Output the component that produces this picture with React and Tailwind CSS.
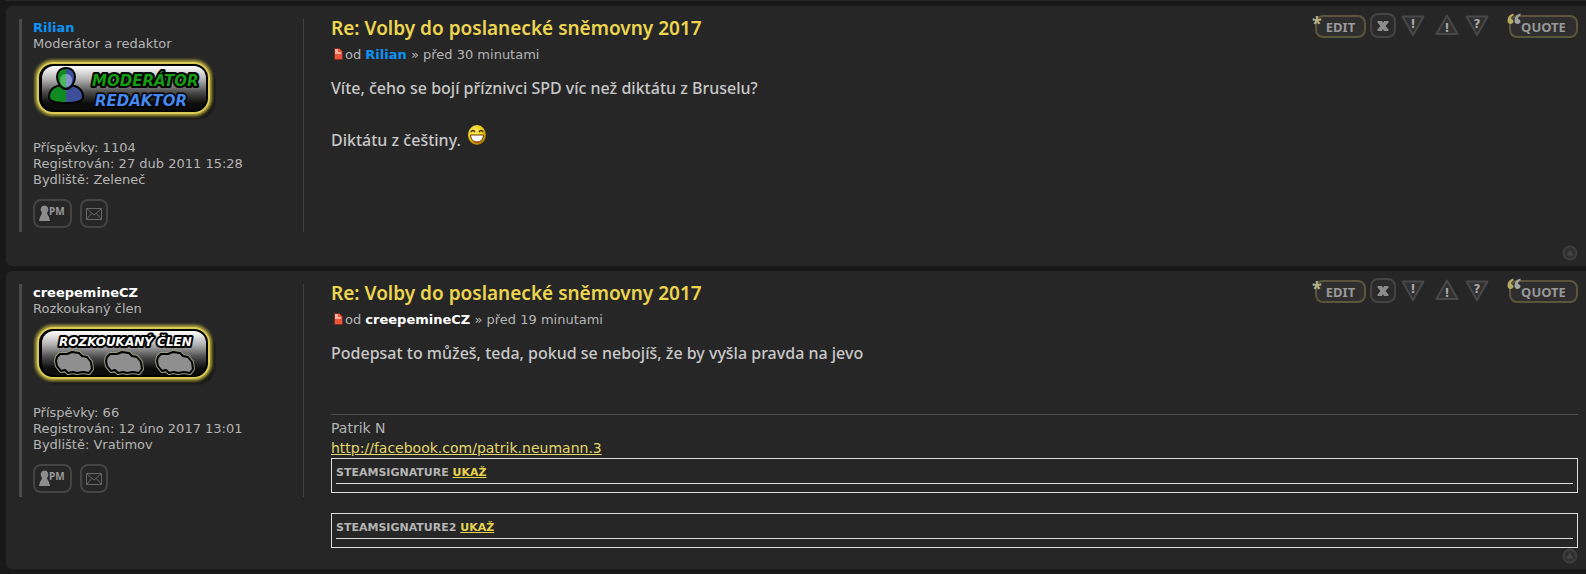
const posts = [
  {
    id: "p1",
    author: "Rilian",
    authorColor: "text-[#0c93f5]",
    rank: "Moderátor a redaktor",
    badge: "moderator",
    count: "1104",
    joined: "27 dub 2011 15:28",
    place: "Zeleneč",
    time: "před 30 minutami",
  },
  {
    id: "p2",
    author: "creepemineCZ",
    authorColor: "text-white",
    rank: "Rozkoukaný člen",
    badge: "member",
    count: "66",
    joined: "12 úno 2017 13:01",
    place: "Vratimov",
    time: "před 19 minutami",
  },
];

function BadgeFrame({ id, label, children }) {
  return (
    <svg width="184" height="64" viewBox="0 0 184 64" role="img" aria-label={label} className="block">
      <defs>
        <linearGradient id={`${id}-fill`} x1="0" y1="0" x2="0" y2="1">
          <stop offset="0" stopColor="#ffffff" />
          <stop offset="0.3" stopColor="#b4b4b4" />
          <stop offset="0.6" stopColor="#4a4a4a" />
          <stop offset="0.85" stopColor="#0c0c0c" />
        </linearGradient>
        <filter id={`${id}-glow`} x="-10%" y="-20%" width="120%" height="140%">
          <feGaussianBlur stdDeviation="1.6" />
        </filter>
      </defs>
      <rect x="6" y="8" width="175" height="53" rx="16" fill="#111111" filter={`url(#${id}-glow)`} />
      <rect x="4" y="5" width="173" height="52" rx="16" fill="none" stroke="#b5a83e" strokeWidth="4" filter={`url(#${id}-glow)`} />
      <rect x="5" y="6" width="171" height="50" rx="15" fill="#000000" stroke="#d9cb55" strokeWidth="2" />
      <rect x="9" y="9" width="164" height="44" rx="12" fill={`url(#${id}-fill)`} />
      {children}
    </svg>
  );
}

function ModeratorBadge() {
  return (
    <BadgeFrame id="moderator" label="Moderátor redaktor">
      <defs>
        <linearGradient id="person" x1="0" y1="0" x2="1" y2="0">
          <stop offset="0.5" stopColor="#128a22" />
          <stop offset="0.5" stopColor="#3c4f98" />
        </linearGradient>
      </defs>
      <g transform="translate(0 2)">
        <g stroke="#000000" strokeWidth="2" fill="url(#person)">
          <path d="M16 38c0-8 6-11 13-12v-4h8v4c7 1 13 4 13 12 0 4-7 6-17 6s-17-2-17-6z" />
          <path d="M33 9c6 0 9 4 9 9s-4 12-9 12-9-7-9-12 3-9 9-9z" />
        </g>
        <path d="M33 15c-4 0-6 3-6 6 0 4 2 7 6 7z" fill="#4bb560" />
        <path d="M33 15c4 0 6 3 6 6 0 4-2 7-6 7z" fill="#8195cc" />
      </g>
      <g
        fontFamily="'DejaVu Sans', sans-serif"
        fontStyle="italic"
        fontWeight="700"
        fontSize="15"
        stroke="#000000"
        paintOrder="stroke"
        strokeLinejoin="round"
      >
        <text x="59" y="29" fill="#159c15" strokeWidth="4">
          MODERÁTOR
        </text>
        <text x="62" y="49" fill="#4688ee" strokeWidth="3">
          REDAKTOR
        </text>
      </g>
    </BadgeFrame>
  );
}

function MemberBadge() {
  return (
    <BadgeFrame id="member" label="Rozkoukaný člen">
      <text
        x="26"
        y="24"
        fontFamily="'DejaVu Sans', sans-serif"
        fontSize="12"
        fontStyle="italic"
        fontWeight="700"
        fill="#ffffff"
        stroke="#000000"
        strokeWidth="4"
        strokeLinejoin="round"
        paintOrder="stroke"
      >
        ROZKOUKANÝ ČLEN
      </text>
      {[0, 50, 101].map((x) => (
        <g key={x} transform={`translate(${x} 1)`} strokeLinejoin="round">
          <path
            d="M24 34l3-3 7 0 5-2 7 1 3 3 5 1 4 5 1 7-3 4-6-1-6 1-4-1-5 1-3-3-4 1-4-5-1-5z"
            fill="none"
            stroke="#9a9a80"
            strokeWidth="4"
          />
          <path
            d="M24 34l3-3 7 0 5-2 7 1 3 3 5 1 4 5 1 7-3 4-6-1-6 1-4-1-5 1-3-3-4 1-4-5-1-5z"
            fill="#8f8f8f"
            stroke="#000000"
            strokeWidth="2"
          />
        </g>
      ))}
    </BadgeFrame>
  );
}

function TriangleIcon({ sign, up }) {
  return (
    <svg width="26" height="25" viewBox="0 0 26 25" className="block">
      <path
        d={up ? "M13 2.5L23.5 21H2.5z" : "M2.5 3.5h21L13 22z"}
        fill="#303030"
        stroke="#484848"
        strokeWidth="2"
        strokeLinejoin="round"
      />
      <text
        x="13"
        y={up ? 19 : 15}
        textAnchor="middle"
        fontFamily="'DejaVu Sans', sans-serif"
        fontSize="12"
        fontWeight="700"
        fill="#aaaaaa"
      >
        {sign}
      </text>
    </svg>
  );
}

function PostActions() {
  return (
    <div className="flex h-6 shrink-0 items-end font-['Noto_Sans',sans-serif] text-[13px] leading-4 font-bold text-[#999999]">
      <a
        href="#edit"
        className="relative mr-1 flex h-[23px] w-[51px] items-center justify-center rounded-lg border-2 border-[#5a563b] bg-[#2e2e2e]"
      >
        <span className="absolute -top-[4px] -left-[5px] text-lg leading-5 text-[#b5b08a]" aria-hidden="true">
          *
        </span>
        EDIT
      </a>
      <a
        href="#delete"
        aria-label="Smazat"
        className="mr-1 flex h-[25px] w-[26px] items-center justify-center rounded-lg border-2 border-[#444444] bg-[#2a2a2a]"
      >
        <svg width="12" height="12" viewBox="0 0 12 12">
          <path d="M0.500 1h4.500L6 3l1-2h4.500v1.500L8.500 6l3 3.500V11H7L6 9l-1 2H0.500V9.500L3.500 6l-3-3.500z" fill="#8c8c8c" />
        </svg>
      </a>
      <a href="#report" aria-label="Nahlásit" className="mr-2">
        <TriangleIcon sign="!" />
      </a>
      <a href="#warn" aria-label="Varovat" className="mr-1">
        <TriangleIcon sign="!" up />
      </a>
      <a href="#info" aria-label="Informace" className="mr-[19px]">
        <TriangleIcon sign="?" />
      </a>
      <a
        href="#quote"
        className="relative flex h-[23px] w-[69px] items-center justify-center rounded-lg border-2 border-[#5a563b] bg-[#2e2e2e]"
      >
        <svg width="14" height="12" viewBox="0 0 14 12" className="absolute -top-[4px] -left-[4px]">
          <path d="M6.500 0.500C2.500 1.500 0.500 4 0.500 7.500 0.500 10 2 11 3.500 11S6.500 10 6.500 8.500 5 6 4 6c0-2 1-3 2.500-3.500z" fill="#b5ab62" />
          <path d="M13.500 0.500C9.500 1.500 7.500 4 7.500 7.500 7.500 10 9 11 10.500 11s3-1 3-2.500S12 6 11 6c0-2 1-3 2.500-3.500z" fill="#a3a3a3" />
        </svg>
        QUOTE
      </a>
    </div>
  );
}

function Profile({ post }) {
  return (
    <aside className="mt-[5px] mb-[13px] h-[213px] w-[285px] shrink-0 border-r border-l-3 border-r-[#404040] border-l-[#4a4a4a] pt-px pl-[11px] text-[13px] leading-4">
      <a href="#profile" className={`block font-bold ${post.authorColor}`}>
        {post.author}
      </a>
      <p>{post.rank}</p>
      <div className="mt-[5px] mb-[19px]">
        {post.badge === "moderator" ? <ModeratorBadge /> : <MemberBadge />}
      </div>
      <p>Příspěvky: {post.count}</p>
      <p>Registrován: {post.joined}</p>
      <p>Bydliště: {post.place}</p>
      <div className="mt-[11px] flex gap-2">
        <a
          href="#pm"
          aria-label="Soukromá zpráva"
          className="flex h-[29px] w-[39px] items-center justify-center rounded-lg border-2 border-[#444444]"
        >
          <svg width="27" height="17" viewBox="0 0 27 17">
            <path d="M5.500 0.500a4 4 0 0 1 3 6.500L8 8.500l2 3.500 1 4H0l1-4 2-3.500L2.500 7a4 4 0 0 1 3-6.500z" fill="#8c8c8c" />
            <text x="10" y="10" fontFamily="'Noto Sans', sans-serif" fontSize="10" fontWeight="700" fill="#999999">
              PM
            </text>
          </svg>
        </a>
        <a
          href="#email"
          aria-label="E-mail"
          className="flex h-[29px] w-[28px] items-center justify-center rounded-lg border-2 border-[#444444]"
        >
          <svg width="16" height="12" viewBox="0 0 16 12" fill="none" stroke="#666666">
            <path d="M0.500 0.500h15v11H0.500zM0.500 0.500L8 7l7.500-6.500M0.500 11.500l5-6M15.500 11.500l-5-6" />
          </svg>
        </a>
      </div>
    </aside>
  );
}

function Grin() {
  return (
    <svg width="20" height="22" viewBox="0 0 20 22" role="img" aria-label=":D" className="-mt-2 ml-[2px] inline-block align-baseline">
      <defs>
        <radialGradient id="grin" cx="0.4" cy="0.35" r="0.65">
          <stop offset="0" stopColor="#ffee66" />
          <stop offset="0.6" stopColor="#f3cf1c" />
          <stop offset="1" stopColor="#a87700" />
        </radialGradient>
      </defs>
      <ellipse cx="10" cy="11" rx="9" ry="10" fill="url(#grin)" />
      <path d="M4 8q2-3 4 0M12 8q2-3 4 0" fill="none" stroke="#3b2a00" strokeWidth="1.500" />
      <path d="M3.500 11h13q-0.500 7-6.500 7t-6.500-7z" fill="#ffffff" stroke="#6b3a00" />
      <path d="M6 16.500q4 3 8 0l-1.500 2h-5z" fill="#c0392b" />
    </svg>
  );
}

function Spoiler({ title }) {
  return (
    <div className="border border-[#dddddd] px-1 pt-[6px] pb-2">
      <div className="border-b border-[#dddddd] pb-[2px] text-[11px] leading-4 font-bold">
        {title}{" "}
        <a href="#show" className="text-[#e8d44d] underline">
          UKAŽ
        </a>
      </div>
    </div>
  );
}

function Post({ post, children }) {
  return (
    <article id={post.id} className="rounded-l-md bg-[#262626] pt-2 pr-2 pb-[5px] pl-[13px]">
      <div className="flex">
        <Profile post={post} />
        <div className="ml-[27px] min-w-0 flex-1">
          <div className="flex h-7 items-start justify-between">
            <h3 className="font-['Noto_Sans',sans-serif] text-[19px] leading-7 font-semibold text-[#edd54f]">
              <a href={`#${post.id}`}>Re: Volby do poslanecké sněmovny 2017</a>
            </h3>
            <PostActions />
          </div>
          <p className="mt-[3px] flex text-[13px] leading-5">
            <svg width="14" height="20" viewBox="0 0 14 20" aria-hidden="true">
              <path d="M3.500 3.500h5l3 3v8h-8z" fill="#e8553a" stroke="#7c2c20" />
              <path d="M4 4h3v3h3v2H4z" fill="#f6b09c" />
            </svg>
            <span>
              od{" "}
              <a href="#profile" className={`font-bold ${post.authorColor}`}>
                {post.author}
              </a>{" "}
              » {post.time}
            </span>
          </p>
          {children}
        </div>
      </div>
      <a href="#top" aria-label="Nahoru" className="ml-auto block size-4">
        <svg width="16" height="16" viewBox="0 0 16 16">
          <circle cx="8" cy="8" r="6.500" fill="#303030" stroke="#3e3e3e" strokeWidth="2" />
          <path d="M8 4.500l3.500 6h-7z" fill="#444444" />
        </svg>
      </a>
    </article>
  );
}

export default function App() {
  return (
    <main className="bg-[#181818] pb-[6px] pl-[6px] font-['DejaVu_Sans',sans-serif] text-[#b5b5b5]">
      <div className="mb-[5px] h-px bg-[#262626]" />
      <div className="flex flex-col gap-[5px]">
        <Post post={posts[0]}>
          <div className="mt-[10px] font-['Noto_Sans',sans-serif] text-base leading-[26px] font-medium text-[#c8c8c8]">
            <p className="mb-[26px]">Víte, čeho se bojí příznivci SPD víc než diktátu z Bruselu?</p>
            <p>
              Diktátu z češtiny. <Grin />
            </p>
          </div>
        </Post>
        <Post post={posts[1]}>
          <p className="mt-[10px] font-['Noto_Sans',sans-serif] text-base leading-[26px] font-medium text-[#c8c8c8]">
            Podepsat to můžeš, teda, pokud se nebojíš, že by vyšla pravda na jevo
          </p>
          <div className="mt-12 border-t border-[#4d4d4d] pt-[3px] text-sm leading-5">
            <p>Patrik N</p>
            <p>
              <a href="http://facebook.com/patrik.neumann.3" className="text-[#e3d66a] underline">
                http://facebook.com/patrik.neumann.3
              </a>
            </p>
            <div className="flex flex-col gap-5">
              <Spoiler title="STEAMSIGNATURE" />
              <Spoiler title="STEAMSIGNATURE2" />
            </div>
          </div>
        </Post>
      </div>
    </main>
  );
}
